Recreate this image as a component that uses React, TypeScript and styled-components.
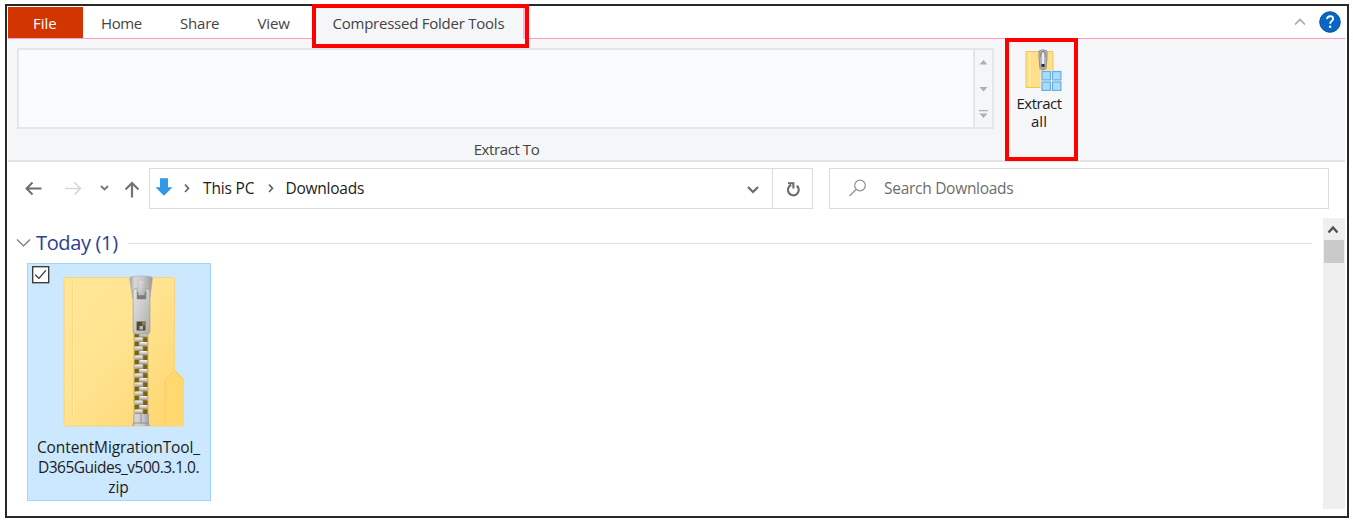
import React from "react";
import styled, { createGlobalStyle } from "styled-components";

const GlobalStyle = createGlobalStyle`
  *, *::before, *::after { box-sizing: border-box; }
  body { margin: 0; background: #fff; font-family: "Open Sans", "Noto Sans", sans-serif; overflow: hidden; }
  svg { display: block; flex: none; }
`;

const Window = styled.div`
  width: 1344px;
  height: 514px;
  margin: 4px 0 0 5px;
  border: 2px solid #28282a;
  padding: 1px 2px 0 1px;
  display: flex;
  flex-direction: column;
  background: #fff;
`;

const Text = styled.span<{ $size?: number; $track?: number; $color?: string }>`
  font-size: ${(p) => p.$size ?? 15.5}px;
  letter-spacing: ${(p) => p.$track ?? 0}px;
  color: ${(p) => p.$color ?? "#1c1c1c"};
  line-height: 20px;
  white-space: pre;
`;

const TabBar = styled.div`
  display: flex;
  height: 32px;
  border-bottom: 1px solid #ff9ac4;
`;

const Tab = styled.div<{ $width: number; $pad: number; $file?: boolean }>`
  width: ${(p) => p.$width}px;
  padding: 5px 0 0 ${(p) => p.$pad}px;
  height: 31px;
  background: ${(p) => (p.$file ? "#d13600" : "transparent")};
  flex: none;
`;

const ActiveTab = styled.div`
  position: relative;
  width: 213px;
  height: 32px;
  margin-left: 4px;
  padding: 5px 0 0 20.5px;
  background: #f4f6f8;
  border-right: 2px solid #ffb6d4;
  flex: none;
`;

const Highlight = styled.div<{ $top: number; $left: number; $w: number; $h: number }>`
  position: absolute;
  z-index: 2;
  top: ${(p) => p.$top}px;
  left: ${(p) => p.$left}px;
  width: ${(p) => p.$w}px;
  height: ${(p) => p.$h}px;
  border: 4px solid #fe0000;
`;

const TabBarEnd = styled.div`
  margin-left: auto;
  display: flex;
  align-items: center;
  gap: 12px;
  padding: 0 4px 2px 0;
`;

const Ribbon = styled.div`
  display: flex;
  height: 123px;
  padding: 9px 0 0 9px;
  background: #f4f6f8;
  border-bottom: 2px solid #e3e4e5;
`;

const GalleryGroup = styled.div`
  width: 977px;
  flex: none;
  display: flex;
  flex-direction: column;
  align-items: center;
`;

const Gallery = styled.div`
  width: 977px;
  height: 81px;
  display: flex;
  border: 2px solid #e4e6e8;
  background: #fafbfd;
  margin-bottom: 9px;
`;

const GalleryButtons = styled.div`
  margin-left: auto;
  width: 19px;
  background: #f5f6f8;
  border-left: 2px solid #e4e6e8;
`;

const GroupLabel = styled.div`
  padding-left: 2px;
`;

const ExtractButton = styled.div`
  position: relative;
  width: 72px;
  margin-left: 11px;
  display: flex;
  flex-direction: column;
  align-items: center;
  padding-right: 4px;
`;

const ExtractArt = styled.div`
  padding-left: 9px;
`;

const ExtractLabel = styled.div`
  margin-top: 3px;
  display: flex;
  flex-direction: column;
  align-items: center;
  & > span { line-height: 17.5px; }
`;

const NavRow = styled.div`
  display: flex;
  height: 56px;
  padding-top: 6px;
`;

const NavButtons = styled.div`
  width: 141px;
  height: 41px;
  flex: none;
`;

const AddressBar = styled.div`
  width: 664px;
  height: 41px;
  border: 1.5px solid #dcdcdc;
  display: flex;
  align-items: center;
  flex: none;
`;

const Crumb = styled.div<{ $width: number }>`
  width: ${(p) => p.$width}px;
  padding-bottom: 1px;
  flex: none;
`;

const RefreshButton = styled.div`
  flex: 1;
  height: 100%;
  border-left: 1px solid #dcdcdc;
`;

const SearchBox = styled.div`
  width: 500px;
  height: 41px;
  margin-left: 16px;
  border: 1.5px solid #dcdcdc;
  display: flex;
  align-items: center;
  flex: none;
`;

const Content = styled.div`
  display: flex;
  height: 291px;
`;

const FileArea = styled.div`
  width: 1315px;
  padding: 11px 11px 0 8px;
`;

const GroupHeader = styled.div`
  display: flex;
  align-items: center;
  height: 28px;
`;

const GroupTitle = styled.div`
  width: 92px;
  padding-left: 5px;
  flex: none;
  & > span { line-height: 28px; }
`;

const GroupLine = styled.div`
  height: 1px;
  flex: 1;
  margin: 1px 0 0 5px;
  background: #dfdfe0;
`;

const Tile = styled.div`
  width: 184px;
  height: 238px;
  margin: 6px 0 0 11px;
  background: #cce8ff;
  border: 1px solid #a2d5fc;
  display: flex;
  flex-direction: column;
`;

const TileArt = styled.div`
  display: flex;
  height: 173px;
`;

const FolderSlot = styled.div`
  padding-top: 11px;
`;

const FileName = styled.div`
  display: flex;
  flex-direction: column;
  align-items: center;
  padding-right: 1px;
  & > span { line-height: 20px; }
`;

const Scrollbar = styled.div`
  width: 22px;
  background: #efefef;
  flex: none;
`;

const Thumb = styled.div`
  width: 20px;
  height: 23px;
  margin-left: 1px;
  background: #cacaca;
`;

const Chevron = () => (
  <svg width="12" height="14" viewBox="0 0 12 14" fill="none" stroke="#666" strokeWidth="1.7">
    <path d="M3 3.500 L6.500 7.300 L3 11" />
  </svg>
);

const ExtractIcon = () => (
  <svg width="40" height="44" viewBox="0 0 40 44">
    <rect x="2" y="3.5" width="27" height="36" fill="#ffe08a" stroke="#edc95a" />
    <path d="M5.8 5V38" stroke="#fff0b9" strokeWidth="1.2" />
    <path d="M19 21v12" stroke="#a58f48" strokeWidth="3" strokeDasharray="1.5 1.5" />
    <path d="M15 3q4-2.500 8 0v7l-1 11h-6l-1-11z" fill="#b4b4b4" stroke="#929292" />
    <path d="M17 9V6q0-2.500 2-2.500T21 6v3" fill="#e9e9e9" stroke="#666" strokeWidth="0.9" />
    <path d="M19 7v9" stroke="#eee" strokeWidth="2" />
    <rect x="17.400" y="16" width="3.200" height="3" fill="#333" />
    <path d="M16.500 22.500h21v20h-21z" fill="#eef5f2" />
    {[[18, 23.500], [28.500, 23.500], [18, 34], [28.500, 34]].map(([x, y]) => (
      <rect key={`${x}-${y}`} x={x} y={y} width="8.400" height="8.400" fill="#abdafb" stroke="#68afe1" strokeWidth="1.200" />
    ))}
  </svg>
);

const teeth = Array.from({ length: 18 }, (_, i) => i);

const ZipFolder = () => (
  <svg width="122.500" height="154" viewBox="0 0 124 154" preserveAspectRatio="none">
    <defs>
      <linearGradient id="folder" x1="0" y1="0" x2="1" y2="1">
        <stop offset="0" stopColor="#ffe797" />
        <stop offset="0.45" stopColor="#ffe390" />
        <stop offset="1" stopColor="#ffd46c" />
      </linearGradient>
      <linearGradient id="metal" x1="0" y1="0" x2="1" y2="0">
        <stop offset="0" stopColor="#9c9c9c" />
        <stop offset="0.2" stopColor="#d6d6d6" />
        <stop offset="0.6" stopColor="#c8c8c8" />
        <stop offset="1" stopColor="#969696" />
      </linearGradient>
      <linearGradient id="pull" x1="0" y1="0" x2="1" y2="1">
        <stop offset="0" stopColor="#e6e6e6" />
        <stop offset="1" stopColor="#adadad" />
      </linearGradient>
      <linearGradient id="tooth" x1="0" y1="0" x2="0" y2="1">
        <stop offset="0" stopColor="#fafafa" />
        <stop offset="1" stopColor="#aaaaaa" />
      </linearGradient>
    </defs>
    <path d="M1 2.500H111q2 0 2 2V95l9 9v45q0 2-2 2H1z" fill="url(#folder)" stroke="#f5d47a" strokeWidth="1" />
    <path d="M113 95.500l9 8.800V149q0 2-2 2H102V104z" fill="#ffd970" />
    <path d="M101.500 151q2-1 2-4v-42l9.500-9.500 9 9" fill="none" stroke="#f2cb68" strokeWidth="1" />
    <path d="M9.500 8V144" stroke="#f6d981" strokeWidth="1" />
    <path d="M10.700 8V144" stroke="#ffefb1" strokeWidth="1" />
    <path d="M71 57h16v82H71z" fill="#e3cb78" />
    <path d="M72.500 57h13v82h-13z" fill="#a8986a" />
    {teeth.map((i) => {
      const y = 58 + i * 4.5;
      const left = i % 2 === 0;
      return (
        <g key={i}>
          <rect x={left ? 72.5 : 81.3} y={y} width="4.200" height="4.500" fill="#7d6215" />
          <rect x={left ? 77.5 : 72.8} y={y} width="7.700" height="3.600" rx="0.7" fill="url(#tooth)" />
        </g>
      );
    })}
    <path d="M71 139h16v9l1 3H70l1-3z" fill="url(#metal)" />
    <path d="M79 139v9M71 148h16" stroke="#8c8c8c" strokeWidth="0.9" />
    <path d="M67.500 4q0-2 2-2.400 9.500-1.600 19 0 2 .4 2 2.400L88 23H70.500z" fill="url(#metal)" stroke="#b0b0b0" strokeWidth="0.6" />
    <path d="M71 16q1-3 4-3v11h9V13q4 0 4 4v39q0 3-3 3H74q-3 0-3-3z" fill="url(#pull)" stroke="#999" strokeWidth="0.7" />
    <path d="M75 17h9v7h-9z" fill="#7c7c80" />
    <path d="M76.500 20V7q0-2 3-2t3 2v13z" fill="url(#pull)" stroke="#b4b4b4" strokeWidth="0.5" />
    <path d="M74.500 46.500h9v9h-9z" fill="#544b31" />
    <path d="M77.500 51h3.500v3.500h-3.500z" fill="#bbb" />
    <path d="M80 46.500h3.500v4H80z" fill="#897d5b" />
  </svg>
);

export default function App() {
  return (
    <>
      <GlobalStyle />
      <Window>
        <TabBar>
          <Tab $file $width={74.5} $pad={25}><Text $size={15} $color="#fff">File</Text></Tab>
          <Tab $width={79} $pad={18.5}><Text $size={15} $track={-0.4} $color="#444">Home</Text></Tab>
          <Tab $width={77} $pad={18.5}><Text $size={15} $track={-0.2} $color="#444">Share</Text></Tab>
          <Tab $width={69.5} $pad={19}><Text $size={15} $track={-0.1} $color="#444">View</Text></Tab>
          <ActiveTab>
            <Text $size={15} $track={-0.24} $color="#444">Compressed Folder Tools</Text>
            <Highlight $top={-3} $left={0} $w={217} $h={44} />
          </ActiveTab>
          <TabBarEnd>
            <svg width="14" height="10" viewBox="0 0 14 10" fill="none" stroke="#a9a9a9" strokeWidth="1.7">
              <path d="M2 7.500 L7 2.500 L12 7.500" />
            </svg>
            <svg width="22" height="22" viewBox="0 0 22 22">
              <circle cx="11" cy="11" r="10.300" fill="#0866c6" stroke="#15528f" strokeWidth="1" />
              <path d="M8 8q.4-2.700 3.200-2.700 2.900 0 2.900 2.400 0 1.500-1.600 2.500Q11.200 11 11.200 12.800" fill="none" stroke="#fff" strokeWidth="1.900" />
              <circle cx="11.100" cy="15.800" r="1.250" fill="#fff" />
            </svg>
          </TabBarEnd>
        </TabBar>

        <Ribbon>
          <GalleryGroup>
            <Gallery>
              <GalleryButtons>
                <svg width="17" height="77" viewBox="0 0 17 77" fill="#a9b0ba">
                  <path d="M4.500 14.500h8L8.500 10zM4.500 37h8l-4 4.500zM4 60h9v1.200H4zM4.500 63.500h8l-4 4.500z" />
                </svg>
              </GalleryButtons>
            </Gallery>
            <GroupLabel><Text $size={15} $track={-0.4} $color="#444">Extract To</Text></GroupLabel>
          </GalleryGroup>
          <ExtractButton>
            <ExtractArt><ExtractIcon /></ExtractArt>
            <ExtractLabel>
              <Text $size={15} $track={-0.5}>Extract</Text>
              <Text $size={15}>all</Text>
            </ExtractLabel>
            <Highlight $top={-10} $left={0} $w={73} $h={123} />
          </ExtractButton>
        </Ribbon>

        <NavRow>
          <NavButtons>
            <svg width="141" height="41" viewBox="0 0 141 41" fill="none" strokeWidth="1.900">
              <path d="M33.500 20.500H18.500M24.500 14.500l-6 6 6 6" stroke="#6c6c6c" />
              <path d="M57 20.500H72.500M66.500 14.500l6 6-6 6" stroke="#d6d6d6" strokeWidth="1.600" />
              <path d="M93 18l3.500 3.500L100 18" stroke="#777" />
              <path d="M124 29.500V15M117.500 21.500l6.500-6.500 6.500 6.500" stroke="#737373" strokeWidth="2.200" />
            </svg>
          </NavButtons>
          <AddressBar>
            <Crumb $width={32}>
              <svg width="32" height="24" viewBox="0 0 32 24">
                <path d="M10 2.300h8v9h4.500L14 19.800 5.500 11.300H10z" fill="#3298e7" />
              </svg>
            </Crumb>
            <Crumb $width={21}><Chevron /></Crumb>
            <Crumb $width={62.5}><Text $track={-0.15}>This PC</Text></Crumb>
            <Crumb $width={20}><Chevron /></Crumb>
            <Crumb $width={458.5}><Text $track={-0.25}>Downloads</Text></Crumb>
            <Crumb $width={28}>
              <svg width="20" height="16" viewBox="0 0 20 16" fill="none" stroke="#6a6a6a" strokeWidth="2.200">
                <path d="M4 7l5 5 5-5" />
              </svg>
            </Crumb>
            <RefreshButton>
              <svg width="39" height="39" viewBox="0 0 39 39" fill="none" stroke="#6b6b6b" strokeWidth="2.100">
                <path d="M23.700 16.700a5.400 5.400 0 1 1-5.500-.7M15 14.200H20.400V19.500" />
              </svg>
            </RefreshButton>
          </AddressBar>
          <SearchBox>
            <svg width="54" height="39" viewBox="0 0 54 39" fill="none" stroke="#8d9299" strokeWidth="1.200">
              <circle cx="30" cy="16.500" r="5.300" />
              <path d="M26 20.500L19.500 27" />
            </svg>
            <Crumb $width={200}><Text $track={-0.28} $color="#6d6d6d">Search Downloads</Text></Crumb>
          </SearchBox>
        </NavRow>

        <Content>
          <FileArea>
            <GroupHeader>
              <svg width="15" height="10" viewBox="0 0 15 10" fill="none" stroke="#777" strokeWidth="1.200">
                <path d="M1 1.500l6.500 6.500L14 1.500" />
              </svg>
              <GroupTitle><Text $size={20} $track={-0.35} $color="#2d3e92">Today (1)</Text></GroupTitle>
              <GroupLine />
            </GroupHeader>
            <Tile>
              <TileArt>
                <svg width="35" height="24" viewBox="0 0 35 24">
                  <rect x="4.700" y="2.700" width="16" height="16" fill="#fff" stroke="#333" strokeWidth="1.300" />
                  <path d="M7.200 10.700l3.700 3.700 7-8" fill="none" stroke="#333" strokeWidth="1.300" />
                </svg>
                <FolderSlot><ZipFolder /></FolderSlot>
              </TileArt>
              <FileName>
                <Text $track={-0.1}>ContentMigrationTool_</Text>
                <Text $track={-0.5}>D365Guides_v500.3.1.0.</Text>
                <Text>zip</Text>
              </FileName>
            </Tile>
          </FileArea>
          <Scrollbar>
            <svg width="22" height="22" viewBox="0 0 22 22" fill="none" stroke="#505050" strokeWidth="2.400">
              <path d="M5.500 14.500l4.500-5L14.500 14.500" />
            </svg>
            <Thumb />
          </Scrollbar>
        </Content>
      </Window>
    </>
  );
}
